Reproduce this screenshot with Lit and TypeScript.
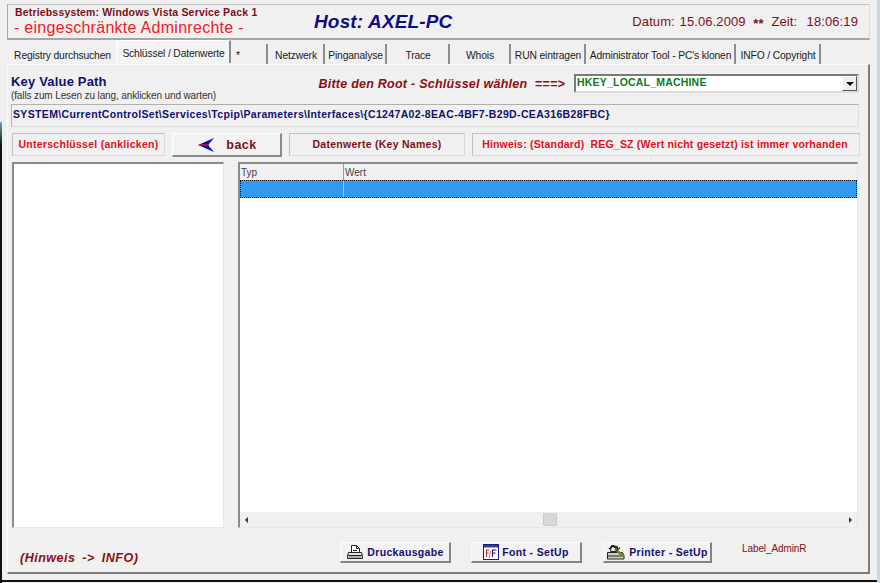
import { LitElement, html, css } from "lit";
import { customElement } from "lit/decorators.js";

const printerIcon = html`<svg class="ico" viewBox="0 0 18 16" width="18" height="16" fill="none" stroke="#222" stroke-width="1"><path d="M5.5 1.500h5l3 3v4h-8z" fill="#fff"/><path d="M10.500 1.500v3h3" /><path d="M7 6.500h4"/><path d="M2.500 8.500h13l1 3v3h-15v-3z" fill="#e4e4dc"/><path d="M2 11.500h14" /><path d="M3 13h12" stroke="#777"/></svg>`;
const fontIcon = html`<svg class="ico" viewBox="0 0 16 16" width="16" height="16"><rect x=".5" y=".5" width="15" height="15" fill="#fff" stroke="#1a1a80"/><rect x="1" y="1" width="14" height="2.500" fill="#3a3a90"/><path d="M3 6h3.500M3.500 6v7M3.500 9h2" stroke="#c02020" fill="none"/><path d="M9 6h4.500M9.500 6v7M9.500 9h3" stroke="#1a1a80" stroke-width="1.200" fill="none"/><path d="M7.500 7l-1.500 7" stroke="#555" stroke-width=".7"/></svg>`;
const printerSetupIcon = html`<svg class="ico" viewBox="0 0 20 17" width="20" height="17" fill="none" stroke="#222"><path d="M5.500 1.500l6 1-1 5h-6z" fill="#fff"/><path d="M1.500 8.500h15l1.500 3v3.500h-16.500z" fill="#cfcfc4"/><path d="M2 12h15" /><path d="M3 5l4-3 5 3" stroke="#111" stroke-width="1.500"/><path d="M9 5l8 7" stroke="#7a8a20" stroke-width="2.600"/><path d="M14 3.500l-5 5" stroke="#3c4a10" stroke-width="1.400"/></svg>`;

@customElement("app-root")
export class AppRoot extends LitElement {
  static styles = css`
    :host { display: block; width: 880px; height: 583px; background: #f0f0f0; font-family: "Liberation Sans", Arial, sans-serif; overflow: hidden; position: relative; }
    .win { width: 880px; height: 582px; box-sizing: border-box; padding: 4px 10px 0 7px; display: flex; flex-direction: column; border-bottom: 2px solid #111; }
    .edge { position: absolute; left: 0; top: 122px; bottom: 0; width: 2px; background: linear-gradient(#6fa3b0, #111 24px); }
    .edge-r { position: absolute; right: 0; top: 0; bottom: 0; width: 3px; background: #c9d8e4; }
    .head { height: 36px; box-sizing: border-box; border: 1px solid #c4c4c4; border-left-color: #a8a8a8; border-bottom: 2px solid #a6a6a6; border-right-color: #dcdcdc; display: grid; grid-template-columns: 299px 1fr auto; align-items: center; padding: 0 11px 0 7px; width: 863px; }
    .os { font-size: 10.500px; font-weight: 700; color: #7a1018; letter-spacing: .17px; line-height: 12px; margin-bottom: 1px; white-space: nowrap; }
    .mode { font-size: 16px; color: #ee1c24; letter-spacing: .28px; line-height: 18px; margin-left: -1px; white-space: nowrap; }
    .host { font-size: 19px; font-weight: 700; font-style: italic; color: #0d0d80; letter-spacing: .15px; white-space: nowrap; }
    .date { font-size: 13px; color: #7f0f17; letter-spacing: .1px; word-spacing: 1px; white-space: nowrap; padding-top: 1px; }
    .date b { font-size: 13px; margin: 0 3px; vertical-align: -2px; }
    .tabs { display: flex; height: 24px; padding: 1px 0 0 1px; align-items: flex-end; box-sizing: border-box; }
    .tab { height: 20px; box-sizing: border-box; font-size: 10.300px; color: #222; line-height: 19px; text-align: center; white-space: nowrap; border-right: 2px solid #8c8c8c; letter-spacing: -.14px; padding-top: 2px; padding-left: 1px; }
    .tab.plain { border-right-color: transparent; padding-left: 3px; }
    .tab.star { text-align: left; padding-left: 5px; }
    .tab.active { height: 23px; background: #f4f4f4; line-height: 20px; padding-top: 3px; border-top: 1px solid #fff; border-left: 1px solid #fff; margin-bottom: 1px; }
    .panel { flex: none; width: 863px; height: 510px; box-sizing: border-box; border: 1px solid #fafafa; border-right: 2px solid #7c7c7c; border-bottom: 2px solid #7c7c7c; padding: 8px 3px 0 3px; display: flex; flex-direction: column; }
    .r1 { height: 31px; display: grid; grid-template-columns: 307px 1fr; }
    .kvp { font-size: 13px; font-weight: 700; color: #10106e; letter-spacing: .18px; line-height: 15px; margin-top: 1px; }
    .sub { font-size: 10px; color: #333; line-height: 12px; letter-spacing: -.12px; white-space: nowrap; margin-top: 1px; }
    .rootline { display: flex; align-items: flex-start; gap: 9px; }
    .prompt { width: 247px; font-size: 12.500px; font-weight: 700; font-style: italic; color: #8a0f12; letter-spacing: .25px; white-space: nowrap; margin-top: 4px; text-align: right; flex: none; }
    .combo { flex: none; width: 285px; height: 19px; box-sizing: border-box; margin-top: 1px; background: #fff; border: 2px solid #7a7a7a; border-right-color: #dcdcdc; border-bottom-color: #dcdcdc; display: flex; align-items: center; justify-content: space-between; }
    .combo span { font-size: 10.500px; font-weight: 700; color: #0b7a20; letter-spacing: .2px; padding-left: 1px; line-height: 13px; margin-top: -2px; }
    .arrow { width: 15px; height: 15px; box-sizing: border-box; background: #efefef; border: 1px solid #fff; border-right-color: #555; border-bottom-color: #555; display: flex; align-items: center; justify-content: center; }
    .arrow i { width: 0; height: 0; border: 4px solid transparent; border-top: 4px solid #111; border-bottom: 0; }
    .path { width: 848px; height: 23px; box-sizing: border-box; border: 1px solid #b0b0b0; border-right-color: #dcdcdc; border-bottom-color: #dcdcdc; font-size: 10.500px; font-weight: 700; color: #10106e; line-height: 19px; letter-spacing: .34px; padding-left: 1px; white-space: nowrap; }
    .r3 { display: grid; grid-template-columns: 153px 110px 176px 388px; column-gap: 7px; margin-top: 6px; height: 23px; margin-left: 1px; }
    .lab { box-sizing: border-box; height: 23px; border: 1px solid #c0c0c0; border-right-color: #d8d8d8; border-bottom-color: #d8d8d8; font-size: 10.500px; font-weight: 700; text-align: center; line-height: 21px; white-space: nowrap; letter-spacing: .27px; }
    .lab.long { letter-spacing: .19px; padding-right: 2px; }
    .red { color: #e01020; }
    .maroon { color: #7f1018; }
    .back { box-sizing: border-box; height: 24px; background: #f2f2f2; border: 1px solid #fff; border-right: 2px solid #8a8a8a; border-bottom: 2px solid #8a8a8a; display: flex; align-items: center; justify-content: center; gap: 11px; font-size: 12.500px; font-weight: 700; color: #7a1018; letter-spacing: .5px; padding-left: 2px; }
    .main { display: grid; grid-template-columns: 212px 620px; column-gap: 14px; margin-top: 6px; height: 365px; margin-left: 1px; }
    .list { box-sizing: border-box; background: #fff; border: 2px solid #8a8a8a; border-right: 1px solid #e8e8e8; border-bottom: 1px solid #e8e8e8; height: 366px; }
    .grid { box-sizing: border-box; border: 2px solid #8a8a8a; border-right: 1px solid #e8e8e8; border-bottom: 1px solid #e8e8e8; display: flex; flex-direction: column; background: #fff; height: 366px; }
    .thead { height: 16px; background: #f0f0f0; display: grid; grid-template-columns: 104px 1fr; font-size: 10px; color: #444; line-height: 17px; flex: none; }
    .thead div { padding-left: 1px; border-right: 1px solid #999; }
    .thead div:last-child { border: 0; }
    .sel { height: 18px; flex: none; background: #3398f0; border: 1px dotted #111; box-sizing: border-box; display: grid; grid-template-columns: 103px 1fr; }
    .sel div { border-right: 1px solid #9cc8f2; }
    .rows { flex: 1; }
    .hs { height: 15px; background: #f0f0f0; flex: none; display: flex; align-items: center; justify-content: space-between; padding: 0 5px; position: relative; }
    .tl { border: 3px solid transparent; border-right: 3px solid #333; border-left: 0; }
    .tr { border: 3px solid transparent; border-left: 3px solid #333; border-right: 0; }
    .thumb { position: absolute; left: 303px; top: 0; width: 14px; height: 14px; box-sizing: border-box; background: #d8d8d8; border: 1px solid #c8c8c8; border-top-color: #eee; border-radius: 2px; }
    .foot { display: grid; grid-template-columns: 328px 111px 20px 111px 21px 109px 30px auto; margin-top: 1px; margin-left: 1px; height: 40px; }
    .info { font-size: 12.500px; font-weight: 700; font-style: italic; color: #8a0f12; letter-spacing: .5px; padding: 23px 0 0 8px; white-space: nowrap; word-spacing: 3px; }
    .btn { box-sizing: border-box; height: 21px; margin-top: 14px; background: #f2f2f2; border-top: 1px solid #fbfbfb; border-left: 1px solid #fbfbfb; border-right: 2px solid #848484; border-bottom: 2px solid #848484; display: flex; align-items: center; justify-content: center; gap: 3px; font-size: 10.500px; font-weight: 700; color: #10106e; letter-spacing: .33px; white-space: nowrap; }
    .ico { flex: none; }
    .admin { grid-column: 8; font-size: 10px; color: #7f1018; padding-top: 15px; white-space: nowrap; letter-spacing: -.1px; }
  `;

  tabs: [string, number, string?][] = [
    ["Registry durchsuchen", 108, "plain"], ["Schlüssel / Datenwerte", 115, "active"],
    ["*", 37, "star"], ["Netzwerk", 57], ["Pinganalyse", 62], ["Trace", 63], ["Whois", 61],
    ["RUN eintragen", 75], ["Administrator Tool  - PC's klonen", 150], ["INFO / Copyright", 85],
  ];

  render() {
    return html`<div class="win">
      <div class="head">
        <div><div class="os">Betriebssystem: Windows Vista Service Pack 1</div><div class="mode">- eingeschränkte Adminrechte -</div></div>
        <div class="host">Host: AXEL-PC</div>
        <div class="date">Datum: 15.06.2009 <b>**</b> Zeit: &nbsp;18:06:19</div>
      </div>
      <div class="tabs">${this.tabs.map(([t, w, c]) => html`<div class="tab ${c ?? ""}" style="width:${w}px">${t}</div>`)}</div>
      <div class="panel">
        <div class="r1">
          <div><div class="kvp">Key Value Path</div><div class="sub">(falls zum Lesen zu lang, anklicken und warten)</div></div>
          <div class="rootline"><div class="prompt">Bitte den Root - Schlüssel wählen &nbsp;===&gt;</div>
            <div class="combo"><span>HKEY_LOCAL_MACHINE</span><div class="arrow"><i></i></div></div></div>
        </div>
        <div class="path">SYSTEM\\CurrentControlSet\\Services\\Tcpip\\Parameters\\Interfaces\\{C1247A02-8EAC-4BF7-B29D-CEA316B28FBC}</div>
        <div class="r3">
          <div class="lab red">Unterschlüssel (anklicken)</div>
          <div class="back"><svg width="17" height="14" viewBox="0 0 17 14"><path d="M0 7L16 0 10 7z" fill="#0c0ca0"/><path d="M0 7L16 14 10 7z" fill="#0c0ca0"/><path d="M2 7h9" stroke="#d01030" stroke-width="1.500"/></svg>back</div>
          <div class="lab maroon">Datenwerte (Key Names)</div>
          <div class="lab long red">Hinweis: (Standard) &nbsp;REG_SZ (Wert nicht gesetzt) ist immer vorhanden</div>
        </div>
        <div class="main">
          <div class="list"></div>
          <div class="grid">
            <div class="thead"><div>Typ</div><div>Wert</div></div>
            <div class="sel"><div></div><span></span></div>
            <div class="rows"></div>
            <div class="hs"><i class="tl"></i><div class="thumb"></div><i class="tr"></i></div>
          </div>
        </div>
        <div class="foot">
          <div class="info">(Hinweis -&gt; INFO)</div>
          <div class="btn">${printerIcon}Druckausgabe</div><span></span>
          <div class="btn">${fontIcon}Font - SetUp</div><span></span>
          <div class="btn">${printerSetupIcon}Printer - SetUp</div><span></span>
          <div class="admin">Label_AdminR</div>
        </div>
      </div>
    </div>
    <div class="edge"></div><div class="edge-r"></div>`;
  }
}
